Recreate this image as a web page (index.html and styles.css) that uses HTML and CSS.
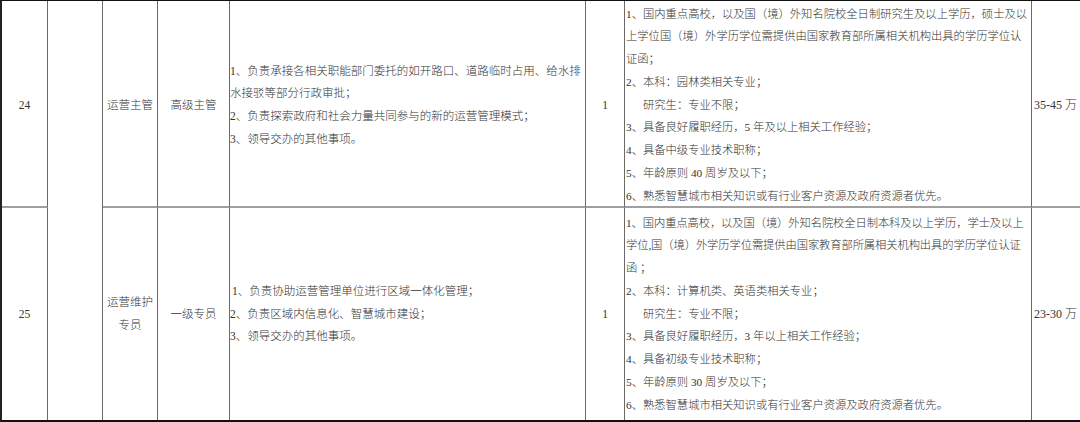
FILE: index.html
```html
<!DOCTYPE html>
<html lang="zh-CN">
<head>
<meta charset="utf-8">
<title>岗位表</title>
<link rel="stylesheet" href="styles.css">
</head>
<body>
<div class="sheet">
  <div class="cell c1 r1 center">24</div>
  <div class="cell c2 span center"></div>
  <div class="cell c3 r1 center">运营主管</div>
  <div class="cell c4 r1 center">高级主管</div>
  <div class="cell c5 r1 text">
    <div class="lines">
      <div>1、负责承接各相关职能部门委托的如开路口、道路临时占用、给水排</div>
      <div>水接驳等部分行政审批；</div>
      <div>2、负责探索政府和社会力量共同参与的新的运营管理模式；</div>
      <div>3、领导交办的其他事项。</div>
    </div>
  </div>
  <div class="cell c6 r1 center">1</div>
  <div class="cell c7 r1 text">
    <div class="lines req">
      <div>1、国内重点高校，以及国（境）外知名院校全日制研究生及以上学历，硕士及以</div>
      <div>上学位国（境）外学历学位需提供由国家教育部所属相关机构出具的学历学位认</div>
      <div>证函；</div>
      <div>2、本科：园林类相关专业；</div>
      <div class="indent">研究生：专业不限；</div>
      <div>3、具备良好履职经历，5 年及以上相关工作经验；</div>
      <div>4、具备中级专业技术职称；</div>
      <div>5、年龄原则 40 周岁及以下；</div>
      <div>6、熟悉智慧城市相关知识或有行业客户资源及政府资源者优先。</div>
    </div>
  </div>
  <div class="cell c8 r1 pay">35-45 万</div>

  <div class="cell c1 r2 center">25</div>
  <div class="cell c3 r2 center"><span class="wrap">运营维护专员</span></div>
  <div class="cell c4 r2 center">一级专员</div>
  <div class="cell c5 r2 text">
    <div class="lines">
      <div class="shift">1、负责协助运营管理单位进行区域一体化管理；</div>
      <div>2、负责区域内信息化、智慧城市建设；</div>
      <div>3、领导交办的其他事项。</div>
    </div>
  </div>
  <div class="cell c6 r2 center">1</div>
  <div class="cell c7 r2 text">
    <div class="lines req">
      <div class="tight">1、国内重点高校，以及国（境）外知名院校全日制本科及以上学历，学士及以上</div>
      <div class="tight">学位,国（境）外学历学位需提供由国家教育部所属相关机构出具的学历学位认证</div>
      <div>函 ；</div>
      <div>2、本科：计算机类、英语类相关专业；</div>
      <div class="indent">研究生：专业不限；</div>
      <div>3、具备良好履职经历，3 年以上相关工作经验；</div>
      <div>4、具备初级专业技术职称；</div>
      <div>5、年龄原则 30 周岁及以下；</div>
      <div>6、熟悉智慧城市相关知识或有行业客户资源及政府资源者优先。</div>
    </div>
  </div>
  <div class="cell c8 r2 pay">23-30 万</div>
</div>
</body>
</html>
```

FILE: styles.css
```css
html, body {
  margin: 0;
  padding: 0;
  background: #ffffff;
  overflow: hidden;
  width: 1080px;
  height: 422px;
}

.sheet {
  display: grid;
  grid-template-columns: 46px 55px 55px 72px 356px 39px 407px 60px;
  grid-template-rows: 207px 212px;
  width: 1092px;
  border-top: 1px solid #111;
  border-bottom: 2px solid #111;
  border-left: 2px solid #222;
  font-family: "Liberation Serif", "Noto Sans CJK SC", serif;
  font-size: 11.5px;
  font-weight: 300;
  color: #333333;
  line-height: 22.75px;
}

.cell {
  border-right: 1px solid #6a6a6a;
  display: flex;
  align-items: center;
  min-width: 0;
  overflow: visible;
}

.r1 {
  grid-row: 1;
  border-bottom: 2px solid #a0a0a0;
  padding-top: 3px;
}

.r2 {
  grid-row: 2;
}

.span {
  grid-row: 1 / span 2;
  grid-column: 2;
}

.c1 { grid-column: 1; }
.c3 { grid-column: 3; }
.c4 { grid-column: 4; }
.c5 { grid-column: 5; }
.c6 { grid-column: 6; }
.c7 { grid-column: 7; }
.c8 { grid-column: 8; border-right: none; }

.center {
  justify-content: center;
  text-align: center;
}

.wrap {
  display: block;
  width: 48px;
  line-height: 23px;
}

.text {
  justify-content: flex-start;
}

.lines {
  white-space: nowrap;
}

.shift {
  padding-left: 2px;
}

.req {
  font-size: 11.3px;
  padding-left: 1px;
}

.tight {
  letter-spacing: -0.1px;
}

.indent {
  padding-left: 17px;
}

.pay {
  justify-content: flex-start;
  padding-left: 2px;
  white-space: pre;
  font-size: 12px;
}
```
